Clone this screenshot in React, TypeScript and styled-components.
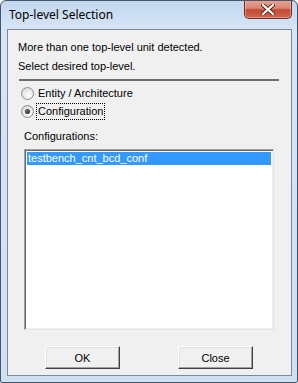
import React from "react";
import styled, { createGlobalStyle } from "styled-components";

const GlobalStyle = createGlobalStyle`
  html, body {
    margin: 0;
    padding: 0;
    background: #ffffff;
  }
`;

const Window = styled.div`
  box-sizing: border-box;
  width: 298px;
  height: 383px;
  display: flex;
  flex-direction: column;
  border: 1px solid #45556a;
  border-radius: 6px 6px 2px 2px;
  background: linear-gradient(
    to bottom,
    #c2d7ef 0px,
    #d6e5f6 28px,
    #cfe0f3 100%
  );
  overflow: hidden;
`;

const TitleBar = styled.div`
  height: 28px;
  display: flex;
  align-items: flex-start;
  justify-content: space-between;
`;

const Title = styled.span`
  margin: 6px 0 0 8px;
  font-family: "Noto Sans", "Open Sans", sans-serif;
  font-size: 12px;
  line-height: 16px;
  color: #000000;
`;

const CloseButton = styled.div`
  box-sizing: border-box;
  width: 48px;
  height: 19px;
  margin: -1px 5px 0 0;
  display: flex;
  align-items: center;
  justify-content: center;
  border: 1px solid #6e2b22;
  border-top: none;
  border-radius: 0 0 5px 5px;
  background: linear-gradient(
    to bottom,
    #e8a493 0%,
    #d78673 45%,
    #c24a33 55%,
    #d2654c 100%
  );
  box-shadow: inset 0 0 0 1px rgba(255, 220, 210, 0.45);
`;

const Client = styled.div`
  flex: 1;
  box-sizing: border-box;
  margin: 0 5px 6px 6px;
  border: 1px solid #7d8b99;
  background: #f0f0f0;
  display: flex;
  flex-direction: column;
  font-family: "Liberation Sans", Arial, sans-serif;
  font-size: 11px;
  color: #000000;
`;

const Message = styled.div`
  margin: 8px 0 0 10px;
  line-height: 19px;
`;

const Separator = styled.div`
  height: 2px;
  margin: 3px 12px 3px 11px;
  background: #6d6d6d;
`;

const RadioRow = styled.label`
  height: 18px;
  display: flex;
  align-items: center;
  padding-left: 13px;
  gap: 3px;
`;

const RadioCircle = styled.span<{ $checked?: boolean }>`
  box-sizing: border-box;
  width: 13px;
  height: 13px;
  border-radius: 50%;
  border: 1px solid #8f8f8f;
  background: radial-gradient(circle at 60% 65%, #ffffff 0%, #e8e8e8 50%, #c8c8c8 100%);
  display: flex;
  align-items: center;
  justify-content: center;

  &::after {
    content: "";
    display: ${({ $checked }) => ($checked ? "block" : "none")};
    width: 5px;
    height: 5px;
    border-radius: 50%;
    background: radial-gradient(circle at 40% 40%, #6b6b6b 0%, #1a1a1a 100%);
  }
`;

const RadioText = styled.span<{ $focused?: boolean }>`
  padding: 1px 1px;
  line-height: 13px;
  outline: ${({ $focused }) => ($focused ? "1px dotted #000000" : "none")};
  outline-offset: 0;
`;

const ListLabel = styled.div`
  margin: 7px 0 0 16px;
  line-height: 18px;
`;

const ListBox = styled.div`
  box-sizing: border-box;
  width: 250px;
  height: 181px;
  margin: 4px 0 0 16px;
  border: 1px solid;
  border-color: #a0a0a0 #e3e3e3 #e3e3e3 #a0a0a0;
  box-shadow: inset 1px 1px 0 #696969, inset -1px -1px 0 #f0f0f0;
  background: #ffffff;
  padding: 2px;
`;

const ListItem = styled.div<{ $selected?: boolean }>`
  height: 13px;
  line-height: 13px;
  padding-left: 1px;
  color: ${({ $selected }) => ($selected ? "#ffffff" : "#000000")};
  background: ${({ $selected }) => ($selected ? "#3399ff" : "transparent")};
`;

const ButtonRow = styled.div`
  display: flex;
  margin: 16px 0 0 37px;
  gap: 58px;
`;

const Button = styled.button`
  box-sizing: border-box;
  width: 75px;
  height: 23px;
  padding: 0;
  font-family: "Liberation Sans", Arial, sans-serif;
  font-size: 11px;
  color: #000000;
  background: #f0f0f0;
  border: 1px solid;
  border-color: #ffffff #404040 #404040 #ffffff;
  box-shadow: inset -1px -1px 0 #a0a0a0, inset 1px 1px 0 #e3e3e3;
`;

function CloseGlyph() {
  return (
    <svg width="14" height="11" viewBox="0 0 14 11">
      <path
        d="M2 1 L12 10 M12 1 L2 10"
        stroke="#5a2219"
        strokeWidth="4"
        strokeLinecap="square"
      />
      <path
        d="M2 1 L12 10 M12 1 L2 10"
        stroke="#ffffff"
        strokeWidth="2.2"
        strokeLinecap="square"
      />
    </svg>
  );
}

export default function App() {
  return (
    <>
      <GlobalStyle />
      <Window>
        <TitleBar>
          <Title>Top-level Selection</Title>
          <CloseButton>
            <CloseGlyph />
          </CloseButton>
        </TitleBar>
        <Client>
          <Message>
            More than one top-level unit detected.
            <br />
            Select desired top-level.
          </Message>
          <Separator />
          <RadioRow>
            <RadioCircle />
            <RadioText>Entity / Architecture</RadioText>
          </RadioRow>
          <RadioRow>
            <RadioCircle $checked />
            <RadioText $focused>Configuration</RadioText>
          </RadioRow>
          <ListLabel>Configurations:</ListLabel>
          <ListBox>
            <ListItem $selected>testbench_cnt_bcd_conf</ListItem>
          </ListBox>
          <ButtonRow>
            <Button>OK</Button>
            <Button>Close</Button>
          </ButtonRow>
        </Client>
      </Window>
    </>
  );
}
